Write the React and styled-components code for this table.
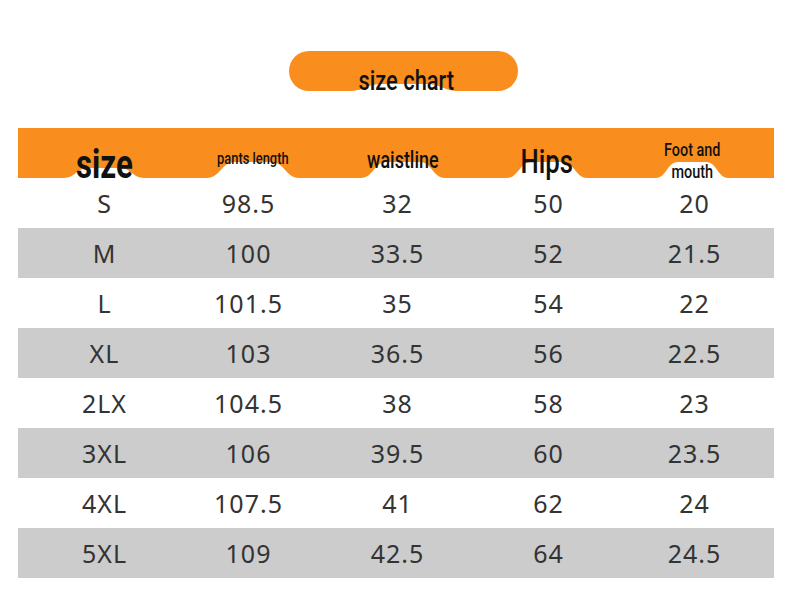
import React from "react";
import styled, { createGlobalStyle } from "styled-components";

const ORANGE = "#f98e1e";

const GlobalStyle = createGlobalStyle`
  body {
    margin: 0;
    background: #ffffff;
    font-family: "Noto Sans", "Open Sans", sans-serif;
  }
`;

const Page = styled.div`
  width: 790px;
  height: 615px;
  padding-top: 51px;
  box-sizing: border-box;
`;

const TitlePill = styled.div`
  position: relative;
  width: 229px;
  height: 40px;
  margin-left: 289px;
  background: ${ORANGE};
  border-radius: 20px;
  display: flex;
  justify-content: center;
  align-items: flex-end;
`;

const Condensed = styled.span`
  position: relative;
  display: inline-block;
  font-family: "Roboto", "Liberation Sans", sans-serif;
  font-weight: 700;
  color: #111;
  transform: scaleX(0.78);
  white-space: nowrap;
`;

const TitleText = styled(Condensed)`
  font-size: 28px;
  line-height: 28px;
  margin-bottom: -4px;
  margin-left: 6px;
  font-weight: 500;
`;

const BumpSvg = styled.svg`
  position: absolute;
  bottom: 0;
  left: 50%;
  transform: translateX(-50%);
  display: block;
`;

const Bump = ({ width, height }) => (
  <BumpSvg width={width} height={height} viewBox={`0 0 ${width} ${height}`}>
    <path
      d={`M0 ${height} C${width * 0.14} ${height} ${width * 0.16} 0 ${width * 0.3} 0 L${width * 0.7} 0 C${width * 0.84} 0 ${width * 0.86} ${height} ${width} ${height} Z`}
      fill="#fff"
    />
  </BumpSvg>
);

const Table = styled.div`
  width: 756px;
  margin: 37px 0 0 18px;
`;

const Row = styled.div`
  display: grid;
  grid-template-columns: 144px 144px 154px 148px 144px;
  padding-left: 14px;
  height: 50px;
  background: ${({ $shade }) => ($shade ? "#cccccc" : "#ffffff")};
`;

const HeaderRow = styled(Row)`
  grid-template-columns: 144px 154px 146px 142px 148px;
  background: ${ORANGE};
`;

const HeadCell = styled.div`
  position: relative;
  display: flex;
  justify-content: center;
  align-items: flex-end;
`;

const HeadText = styled(Condensed)`
  font-size: ${({ $size }) => $size}px;
  line-height: ${({ $lh }) => $lh}px;
  margin-bottom: ${({ $drop }) => $drop}px;
  text-align: center;
  font-weight: ${({ $weight }) => $weight || 700};
`;

const Cell = styled.div`
  display: flex;
  justify-content: center;
  align-items: center;
  font-size: 25px;
  color: #333333;
  letter-spacing: 1px;
  padding-left: 1px;
`;

const headers = [
  { label: "size", size: 40, lh: 40, drop: -7, bump: [80, 10] },
  { label: "pants length", size: 16.5, lh: 18, drop: 10, weight: 500, bump: [92, 16] },
  { label: "waistline", size: 23, lh: 24, drop: 5, weight: 500, bump: [84, 16] },
  { label: "Hips", size: 33, lh: 34, drop: -1, weight: 500, bump: [80, 16] },
  { label: ["Foot and", "mouth"], size: 18.5, lh: 22, drop: -5, weight: 500, bump: [72, 16] },
];

const rows = [
  ["S", "98.5", "32", "50", "20"],
  ["M", "100", "33.5", "52", "21.5"],
  ["L", "101.5", "35", "54", "22"],
  ["XL", "103", "36.5", "56", "22.5"],
  ["2LX", "104.5", "38", "58", "23"],
  ["3XL", "106", "39.5", "60", "23.5"],
  ["4XL", "107.5", "41", "62", "24"],
  ["5XL", "109", "42.5", "64", "24.5"],
];

export default function App() {
  return (
    <Page>
      <GlobalStyle />
      <TitlePill>
        <Bump width={110} height={7} />
        <TitleText>size chart</TitleText>
      </TitlePill>
      <Table>
        <HeaderRow>
          {headers.map((h, i) => (
            <HeadCell key={i}>
              <Bump width={h.bump[0]} height={h.bump[1]} />
              <HeadText $size={h.size} $weight={h.weight} $lh={h.lh} $drop={h.drop}>
                {Array.isArray(h.label) ? (
                  <>
                    {h.label[0]}
                    <br />
                    {h.label[1]}
                  </>
                ) : (
                  h.label
                )}
              </HeadText>
            </HeadCell>
          ))}
        </HeaderRow>
        {rows.map((r, i) => (
          <Row key={r[0]} $shade={i % 2 === 1}>
            {r.map((v, j) => (
              <Cell key={j}>{v}</Cell>
            ))}
          </Row>
        ))}
      </Table>
    </Page>
  );
}
